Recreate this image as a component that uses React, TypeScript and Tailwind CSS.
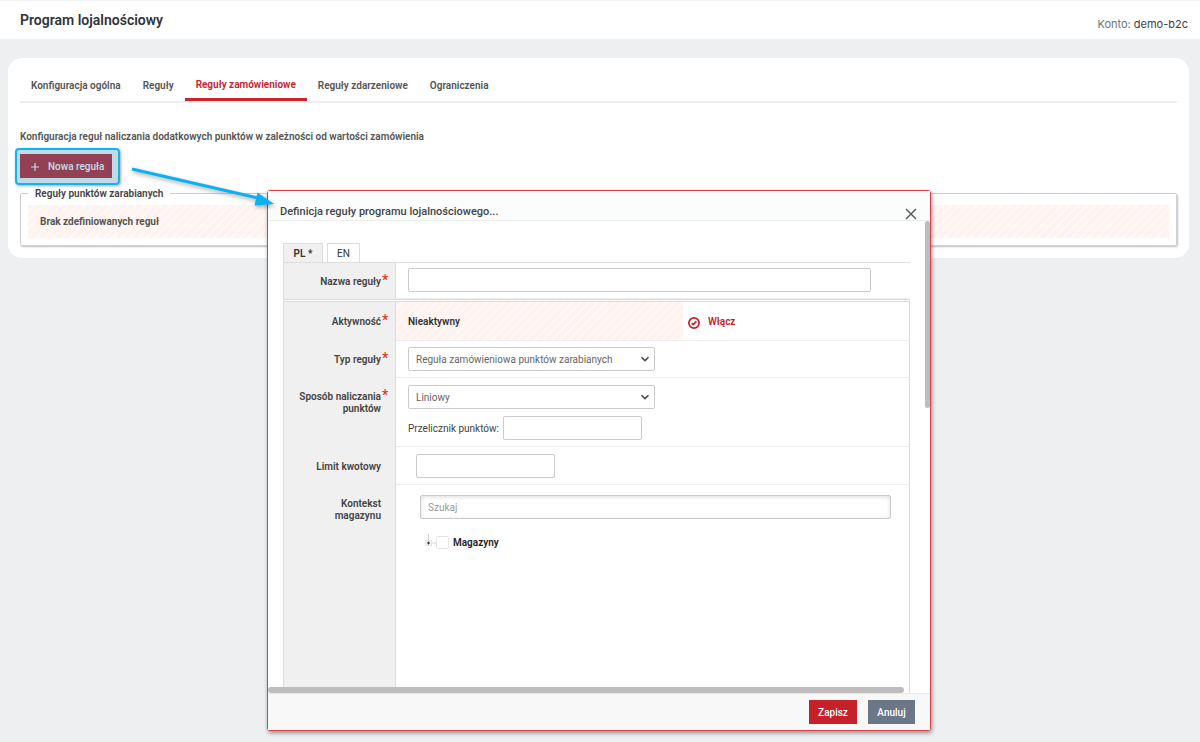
import type { ReactNode } from 'react'
import clsx from 'clsx'

const tabs = ['Konfiguracja ogólna', 'Reguły', 'Reguły zamówieniowe', 'Reguły zdarzeniowe', 'Ograniczenia']

const stripes =
  'bg-[repeating-linear-gradient(135deg,#fef3ef_0px,#fef3ef_4px,#fff8f6_4px,#fff8f6_6px)]'

const field = 'h-6 rounded-xs border border-[#c9cbcd] bg-white px-[7px] text-[10px] text-[#666] outline-none'

function Row({
  label,
  htmlFor,
  required,
  className,
  labelClass,
  children,
}: {
  label: string
  htmlFor?: string
  required?: boolean
  className?: string
  labelClass?: string
  children: ReactNode
}) {
  return (
    <div className={clsx('flex', className)}>
      <div className={clsx('flex w-28 shrink-0 border-r border-[#dcdcdc] bg-[#f0f0f0] pl-3', labelClass)}>
        <label htmlFor={htmlFor} className="flex-1 text-right text-[10px] leading-3 font-semibold text-[#444]">
          {label}
        </label>
        <span className="w-[14px] pl-px text-sm leading-2 font-medium text-[#d63a1e]">{required && '*'}</span>
      </div>
      <div className="min-w-0 flex-1 border-b border-[#ededed]">{children}</div>
    </div>
  )
}

function Select({ id, value }: { id: string; value: string }) {
  return (
    <div className="relative w-[247px]">
      <select id={id} className={clsx(field, 'w-full appearance-none')} defaultValue={value}>
        <option>{value}</option>
      </select>
      <svg className="pointer-events-none absolute top-2 right-[5px] h-2 w-[10px]" viewBox="0 0 10 8" fill="none">
        <path d="M1.5 2.2 5 5.6 8.5 2.2" stroke="#4a4a4a" strokeWidth="1.6" />
      </svg>
    </div>
  )
}

function RuleDialog() {
  return (
    <div
      role="dialog"
      aria-labelledby="dialog-title"
      className="absolute top-[190px] right-0.5 left-0 mx-auto w-full max-w-[664px] rounded-[3px] border border-[#dc3d46] bg-white shadow-[1px_2px_4px_rgba(0,0,0,0.4)]"
    >
      <header className="flex h-[30px] items-end justify-between border-b border-[#ececec] bg-[#fbfcfc] pr-[13px] pl-3">
        <h2 id="dialog-title" className="text-[11px] leading-4 font-medium text-[#444]">
          Definicja reguły programu lojalnościowego...
        </h2>
        <button type="button" aria-label="Zamknij">
          <svg className="size-3" viewBox="0 0 12 12" fill="none">
            <path d="M1 1 11 11M11 1 1 11" stroke="#555" strokeWidth="1.4" />
          </svg>
        </button>
      </header>

      <div className="relative h-[472px] overflow-hidden pt-[22px] pr-5 pl-[15px]">
        <div className="flex items-end gap-1 border-b border-[#dedede] text-[10px] text-[#333]">
          <button type="button" className="h-[19px] w-10 border border-b-0 border-[#dcdcdc] bg-[#f0f0f0] font-semibold">
            PL *
          </button>
          <button type="button" className="h-[19px] w-[33px] border border-b-0 border-[#dcdcdc] bg-white">
            EN
          </button>
        </div>

        <Row
          label="Nazwa reguły"
          htmlFor="name"
          required
          className="mb-px h-[37px] border-b border-l border-[#dcdcdc]"
          labelClass="pt-[13px]"
        >
          <div className="pt-[5px] pl-3">
            <input id="name" className={clsx(field, 'w-full max-w-[463px]')} />
          </div>
        </Row>

        <div className="border border-b-0 border-[#dcdcdc]">
          <Row label="Aktywność" required className="h-[39px]" labelClass="pt-[14px]">
            <div className="flex h-full">
              <div
                className={clsx(stripes, 'flex w-[287px] items-center pl-3 text-[10px] font-semibold text-[#333]')}
              >
                Nieaktywny
              </div>
              <button
                type="button"
                className="flex items-center gap-2 pl-[5px] text-[10px] font-semibold text-[#c5202c]"
              >
                <svg className="mt-1 size-3" viewBox="0 0 12 12" fill="none">
                  <circle cx="6" cy="6" r="5.1" stroke="#c5202c" strokeWidth="1.7" />
                  <path d="M3.7 6.2 5.2 7.6 8.4 4.4" stroke="#c5202c" strokeWidth="1.7" />
                </svg>
                Włącz
              </button>
            </div>
          </Row>

          <Row label="Typ reguły" htmlFor="type" required className="h-[37px]" labelClass="pt-[13px]">
            <div className="pt-[6px] pl-3">
              <Select id="type" value="Reguła zamówieniowa punktów zarabianych" />
            </div>
          </Row>

          <Row label="Sposób naliczania punktów" htmlFor="method" required className="h-[69px]" labelClass="pt-[13px]">
            <div className="pt-[7px] pl-3">
              <Select id="method" value="Liniowy" />
              <div className="mt-[7px] flex items-center gap-1 text-[10px] text-[#444]">
                <label htmlFor="ratio">Przelicznik punktów:</label>
                <input id="ratio" className={clsx(field, 'w-[139px]')} />
              </div>
            </div>
          </Row>

          <Row label="Limit kwotowy" htmlFor="limit" className="h-[38px]" labelClass="pt-[14px]">
            <div className="pt-[7px] pl-5">
              <input id="limit" className={clsx(field, 'w-[139px]')} />
            </div>
          </Row>

          <Row label="Kontekst magazynu" htmlFor="search" className="h-[220px]" labelClass="pt-[13px] pl-8">
            <div className="pt-[10px] pr-[18px] pl-6">
              <input
                id="search"
                placeholder="Szukaj"
                className={clsx(field, 'w-full shadow-[inset_0_1px_4px_rgba(0,0,0,0.14)] placeholder:text-[#999]')}
              />
              <div className="mt-[15px] flex items-center pl-1">
                <button type="button" aria-label="Rozwiń">
                  <svg className="h-4 w-3" viewBox="0 0 12 16" fill="none">
                    <path d="M4.5 0V6M7 9H12" stroke="#d5d5d5" />
                    <rect x="1.5" y="6.5" width="6" height="5" fill="#f3f3f3" stroke="#e6e6e6" />
                    <path d="M3 9H6M4.5 7.5V10.5" stroke="#333" />
                  </svg>
                </button>
                <input
                  id="stores"
                  type="checkbox"
                  className="size-[13px] appearance-none rounded-xs border border-[#e6e6e6] bg-white"
                />
                <label htmlFor="stores" className="pl-1 text-[10px] font-semibold text-[#222]">
                  Magazyny
                </label>
              </div>
            </div>
          </Row>
        </div>

        {/* scrollbars */}
        <div className="absolute top-0 right-0 h-[187px] w-[5px] rounded-full bg-[#bdbdbd]" />
        <div className="absolute bottom-0 left-0 h-[6px] w-[96%] rounded-full bg-[#bdbdbd]" />
      </div>

      <footer className="flex justify-end gap-[11px] border-t border-[#e8e8e8] bg-[#f8f8f8] py-[6px] pr-[15px] text-[10px] font-medium text-white">
        <button type="button" className="h-6 w-12 bg-[#c6202b]">
          Zapisz
        </button>
        <button type="button" className="h-6 w-[47px] bg-[#6b7687]">
          Anuluj
        </button>
      </footer>
    </div>
  )
}

export default function App() {
  return (
    <div className="relative min-h-screen bg-[#edeff1] font-[Roboto,sans-serif] text-[10px]">
      <header className="flex h-[39px] items-center justify-between border-t border-[#f3f3f3] bg-white pr-3 pl-5">
        <h1 className="text-sm font-semibold text-[#30343a]">Program lojalnościowy</h1>
        <div className="pt-2 font-[Inter,sans-serif] text-[11px] text-[#6b7480]">
          Konto: <span className="text-[#3c4045]">demo-b2c</span>
        </div>
      </header>

      <main className="mt-[19px] mr-[11px] ml-2 rounded-[14px] bg-white px-3 pt-[14px] pb-3">
        <nav className="flex h-[31px] border-b-2 border-[#edeef0]">
          {tabs.map((tab) => (
            <a
              key={tab}
              href="#"
              className={clsx(
                'flex px-[11px] leading-[14px] font-semibold',
                tab === 'Reguły zamówieniowe'
                  ? 'border-b-3 border-[#c9252f] pt-[6px] text-[#c5202c]'
                  : 'pt-[7px] text-[#555]',
              )}
            >
              {tab}
            </a>
          ))}
        </nav>

        <p className="mt-[27px] leading-[14px] font-semibold text-[#555]">
          Konfiguracja reguł naliczania dodatkowych punktów w zależności od wartości zamówienia
        </p>

        <div className="relative mt-[10px] w-fit">
          <button type="button" className="flex h-6 items-center bg-[#c4202c] pr-2 pl-[11px] font-medium text-white">
            <svg className="mt-[2px] mr-[9px] size-2" viewBox="0 0 8 8" fill="none">
              <path d="M4 0V8M0 4H8" stroke="white" strokeWidth="1.2" />
            </svg>
            Nowa reguła
          </button>
          <span className="pointer-events-none absolute -top-[6px] -right-[8px] -bottom-[7px] -left-[5px] rounded-[4px] border-2 border-[#12b3ef] bg-[#268ab2]/30 shadow-[1px_1px_3px_rgba(0,0,0,0.35)]" />
        </div>

        <fieldset className="mt-2 rounded-xs border border-[#ced0d2] px-[7px] pb-[7px] shadow-[1px_1px_2px_rgba(0,0,0,0.25)]">
          <legend className="px-[7px] pt-px leading-[14px] font-semibold text-[#444]">Reguły punktów zarabianych</legend>
          <div className={clsx(stripes, 'mt-1 flex h-[33px] items-center pl-3 font-bold text-[#555]')}>
            Brak zdefiniowanych reguł
          </div>
        </fieldset>
      </main>

      <RuleDialog />

      <svg
        className="pointer-events-none absolute top-40 left-[128px] h-[52px] w-[150px] drop-shadow-[1px_2px_2px_rgba(0,0,0,0.35)]"
        viewBox="0 0 150 52"
      >
        <path d="M4 9 130 38" stroke="#0ab2f2" strokeWidth="3" />
        <path d="M129.500 32.500 146 44 126.500 45.500Z" fill="#0ab2f2" />
      </svg>
    </div>
  )
}
